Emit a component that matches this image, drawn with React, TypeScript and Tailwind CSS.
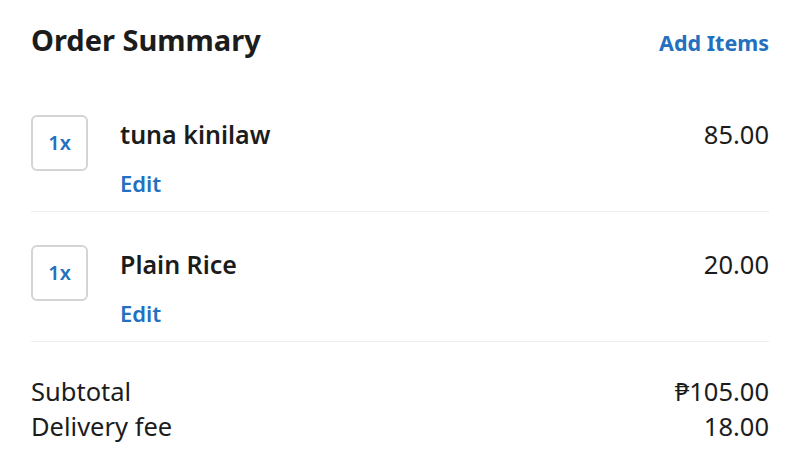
const items = [
  { qty: 1, name: "tuna kinilaw", price: "85.00" },
  { qty: 1, name: "Plain Rice", price: "20.00" },
];

export default function App() {
  return (
    <div className="min-h-screen bg-white px-[31px] pt-[22px] text-[#1c1c1c] font-['Noto_Sans',sans-serif]">
      <div className="flex items-baseline justify-between">
        <h1 className="text-[29px] leading-[36px] font-bold">Order Summary</h1>
        <a href="#" className="text-[21.5px] leading-[36px] font-bold text-[#2370c0]">
          Add Items
        </a>
      </div>
      <div className="mt-[21px]">
        {items.map((item) => (
          <div key={item.name} className="flex items-start border-b border-[#eeeeee] pt-[33px] pb-[14px]">
            <div className="flex h-[56px] w-[57px] shrink-0 items-center justify-center rounded-[6px] border-2 border-[#d4d4d4] text-[20px] font-semibold text-[#2370c0]">
              {item.qty}x
            </div>
            <div className="ml-[32px] mt-[3px] flex-1">
              <div className="flex items-baseline justify-between">
                <span className="text-[25px] leading-[32px] font-semibold">{item.name}</span>
                <span className="text-[25.5px] leading-[32px]">{item.price}</span>
              </div>
              <a href="#" className="mt-[19px] block text-[22px] leading-[28px] font-semibold text-[#2370c0]">
                Edit
              </a>
            </div>
          </div>
        ))}
      </div>
      <div className="mt-[32px] text-[25.5px] leading-[35px]">
        <div className="flex justify-between">
          <span>Subtotal</span>
          <span>₱105.00</span>
        </div>
        <div className="flex justify-between">
          <span>Delivery fee</span>
          <span>18.00</span>
        </div>
      </div>
    </div>
  );
}
